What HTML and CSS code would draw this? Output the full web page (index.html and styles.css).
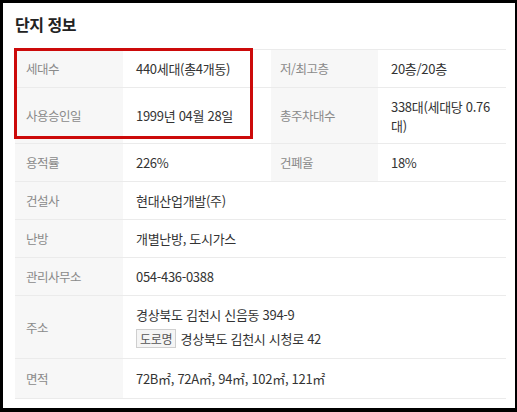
FILE: index.html
```html
<!DOCTYPE html>
<html lang="ko">
<head>
<meta charset="utf-8">
<link rel="stylesheet" href="styles.css">
</head>
<body>
<div class="panel">
  <h2 class="title">단지 정보</h2>
  <div class="table-wrap">
    <table class="info">
      <colgroup>
        <col class="c1"><col class="c2"><col class="c3"><col class="c4">
      </colgroup>
      <tr class="r38">
        <th>세대수</th><td>440세대(총4개동)</td>
        <th>저/최고층</th><td>20층/20층</td>
      </tr>
      <tr class="r56">
        <th>사용승인일</th><td>1999년 04월 28일</td>
        <th>총주차대수</th><td>338대(세대당 0.76대)</td>
      </tr>
      <tr class="r38">
        <th>용적률</th><td>226%</td>
        <th>건폐율</th><td>18%</td>
      </tr>
      <tr class="r38">
        <th>건설사</th><td colspan="3">현대산업개발(주)</td>
      </tr>
      <tr class="r38">
        <th>난방</th><td colspan="3">개별난방, 도시가스</td>
      </tr>
      <tr class="r38">
        <th>관리사무소</th><td colspan="3">054-436-0388</td>
      </tr>
      <tr class="r63">
        <th>주소</th>
        <td colspan="3">
          <div class="addr">경상북도 김천시 신음동 394-9</div>
          <div class="addr"><span class="badge">도로명</span> 경상북도 김천시 시청로 42</div>
        </td>
      </tr>
      <tr class="r40">
        <th>면적</th><td colspan="3">72B㎡, 72A㎡, 94㎡, 102㎡, 121㎡</td>
      </tr>
    </table>
    <div class="highlight"></div>
  </div>
</div>
</body>
</html>
```
FILE: styles.css
```css
html, body {
  margin: 0;
  padding: 0;
}
body {
  background: #000;
  padding: 3px 2px 4px 3px;
  font-family: "Noto Sans CJK KR", "Noto Sans", sans-serif;
}
.panel {
  background: #fff;
  height: 405px;
  padding: 9px 9px 0 12px;
  box-sizing: border-box;
}
.title {
  margin: 0 0 13px 0;
  font-size: 16px;
  line-height: 24px;
  font-weight: 700;
  color: #222;
  letter-spacing: -0.5px;
}
.table-wrap {
  position: relative;
  width: 491px;
}
.info {
  width: 491px;
  table-layout: fixed;
  border-collapse: collapse;
  border-top: 1px solid #ebebeb;
}
.c1 { width: 108px; }
.c2 { width: 148px; }
.c3 { width: 107px; }
.c4 { width: 128px; }
.info tr { border-bottom: 1px solid #ebebeb; }
.info th {
  background: #f7f7f7;
  color: #8a8a8a;
  font-weight: 400;
  text-align: left;
  font-size: 12.5px;
  letter-spacing: -0.5px;
  padding: 0 0 0 11px;
  vertical-align: middle;
}
.info td {
  color: #333;
  font-size: 13px;
  letter-spacing: -0.3px;
  line-height: 19px;
  padding: 0 10px 0 13px;
  vertical-align: middle;
}
.info th + td + th { padding-left: 9px; }
.r38 { height: 38px; }
.r56 { height: 56px; }
.r63 { height: 63px; }
.r40 { height: 40px; }
.addr { line-height: 24px; }
.badge {
  display: inline-block;
  border: 1px solid #cfcfcf;
  background: #f5f5f5;
  color: #555;
  font-size: 12px;
  line-height: 17px;
  padding: 0 3px;
  margin-right: 1px;
}
.highlight {
  position: absolute;
  left: -1px;
  top: -1px;
  width: 239px;
  height: 91px;
  border: 3px solid #cc0a0a;
  box-sizing: border-box;
}
```
